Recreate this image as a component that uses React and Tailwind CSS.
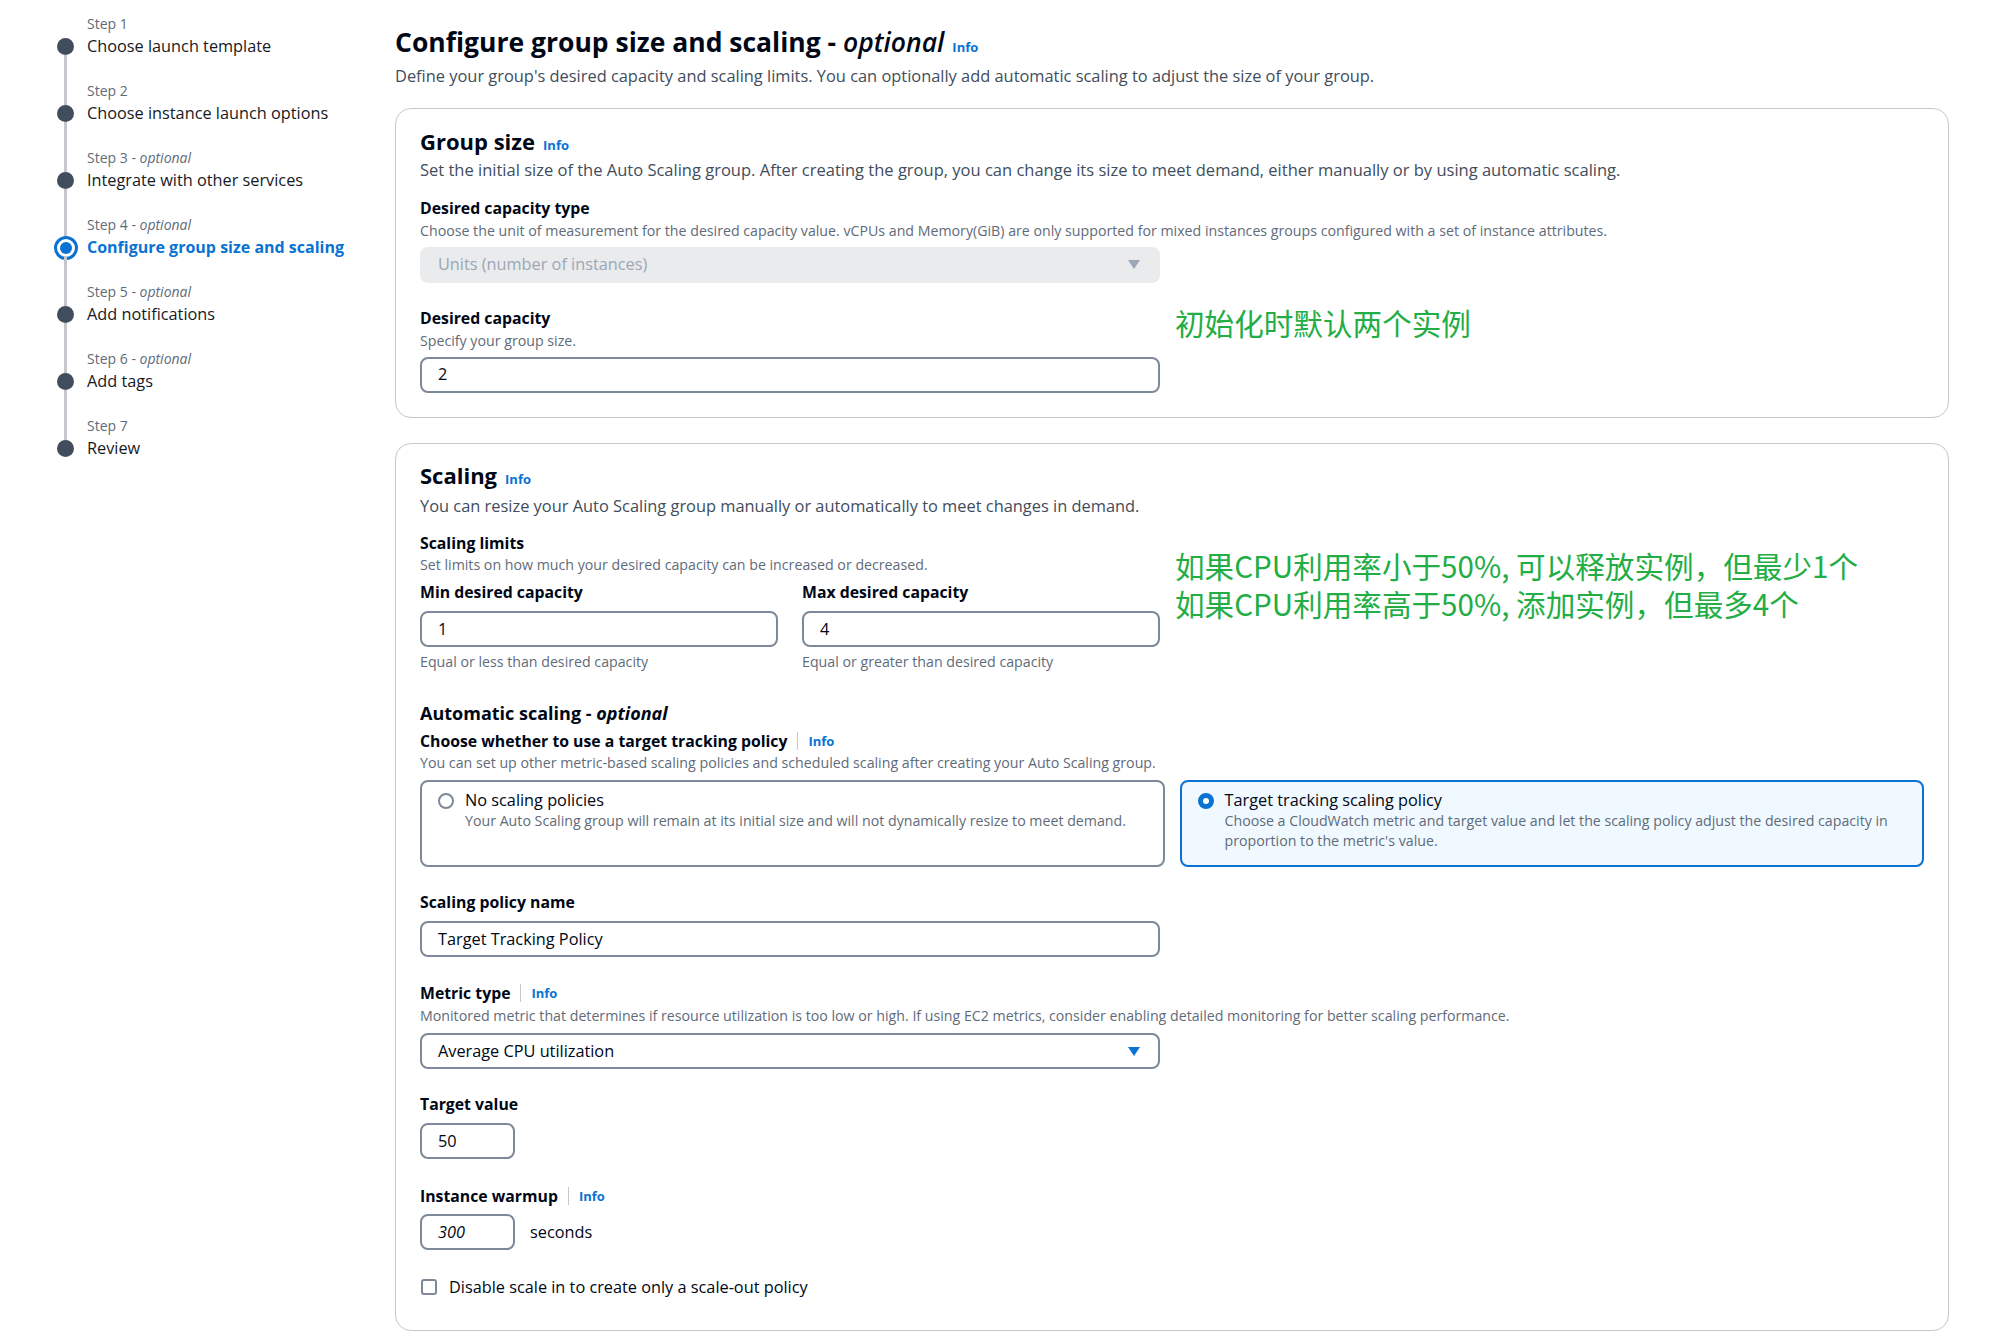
import React from "react";

const steps = [
  { n: 1, title: "Choose launch template" },
  { n: 2, title: "Choose instance launch options" },
  { n: 3, optional: true, title: "Integrate with other services" },
  { n: 4, optional: true, title: "Configure group size and scaling", active: true },
  { n: 5, optional: true, title: "Add notifications" },
  { n: 6, optional: true, title: "Add tags" },
  { n: 7, title: "Review" },
];

function Step({ s, first, last }) {
  return (
    <div className="flex">
      <div className="w-[17px] flex flex-col items-center shrink-0">
        <div className={"w-[3px] h-[25px] " + (first ? "" : "bg-[#c6c6cd]")} />
        <div className="h-[17px] w-[17px] flex items-center justify-center">
          {s.active ? (
            <div className="w-6 h-6 shrink-0 rounded-full border-[3px] border-[#0972d3] bg-white flex items-center justify-center">
              <div className="w-3 h-3 rounded-full bg-[#0972d3]" />
            </div>
          ) : (
            <div className="w-[17px] h-[17px] rounded-full bg-[#414d5c]" />
          )}
        </div>
        <div className={"w-[3px] h-[25px] " + (last ? "" : "bg-[#c6c6cd]")} />
      </div>
      <div className="ml-[13px]">
        <div className="text-[14px] leading-[21px] text-[#5f6b7a]">
          Step {s.n}
          {s.optional && (
            <>
              {" - "}
              <i>optional</i>
            </>
          )}
        </div>
        <div
          className={
            "leading-[24px] whitespace-nowrap " +
            (s.active ? "text-[16px] font-bold text-[#0972d3]" : "text-[16.3px] text-[#16191f]")
          }
        >
          {s.title}
        </div>
      </div>
    </div>
  );
}

function Info({ className = "" }) {
  return <span className={"text-[13px] font-bold text-[#0972d3] " + className}>Info</span>;
}

function Label({ children, className = "" }) {
  return (
    <div className={"text-[15.8px] leading-[22px] font-bold text-[#000716] " + className}>{children}</div>
  );
}

function Desc({ children, className = "" }) {
  return <div className={"text-[14.2px] leading-[18px] text-[#5f6b7a] " + className}>{children}</div>;
}

function Input({ children, className = "" }) {
  return (
    <div
      className={
        "h-9 border-2 border-[#7d8998] rounded-lg px-4 flex items-center text-[16.3px] text-[#000716] " + className
      }
    >
      {children}
    </div>
  );
}

function Arrow({ color }) {
  return (
    <svg width="12" height="9" viewBox="0 0 12 9">
      <path d="M0 0 L12 0 L6 9 Z" fill={color} />
    </svg>
  );
}

function Divider() {
  return <span className="inline-block w-px h-[18px] bg-[#c6c6cd] mx-[10px] align-middle" />;
}

const note2 = "如果CPU利用率小于50%, 可以释放实例，但最少1个\n如果CPU利用率高于50%, 添加实例，但最多4个";

export default function App() {
  return (
    <div className="min-h-screen w-full bg-white flex font-['Open_Sans',sans-serif] text-[#000716]">
      <aside className="w-[395px] shrink-0 pl-[57px] pt-[13px]">
        {steps.map((s, i) => (
          <Step key={s.n} s={s} first={i === 0} last={i === steps.length - 1} />
        ))}
      </aside>

      <main className="flex-1 pr-[55px] pt-[25px] pb-4">
        <h1 className="text-[26.5px] leading-[34px] font-bold text-[#000716] flex items-baseline">
          <span>
            Configure group size and scaling - <i className="font-semibold">optional</i>
          </span>
          <Info className="ml-2" />
        </h1>
        <p className="mt-[1px] text-[16.4px] leading-[22px] text-[#414d5c]">
          Define your group's desired capacity and scaling limits. You can optionally add automatic scaling to adjust
          the size of your group.
        </p>

        {/* Group size */}
        <section className="mt-[21px] border border-[#c6c6cd] rounded-2xl px-6 pt-[18px] pb-[24px]">
          <div className="flex items-baseline">
            <h2 className="text-[22px] leading-[28px] font-bold">Group size</h2>
            <Info className="ml-2" />
          </div>
          <p className="mt-[3px] text-[16.5px] leading-[22px] text-[#414d5c]">
            Set the initial size of the Auto Scaling group. After creating the group, you can change its size to meet
            demand, either manually or by using automatic scaling.
          </p>

          <Label className="mt-[16px]">Desired capacity type</Label>
          <Desc className="mt-[3px]">
            Choose the unit of measurement for the desired capacity value. vCPUs and Memory(GiB) are only supported for
            mixed instances groups configured with a set of instance attributes.
          </Desc>
          <div className="mt-[7px] w-[740px] h-9 rounded-lg bg-[#e9ebed] pl-[18px] pr-5 flex items-center justify-between text-[16.3px] text-[#9ba7b6]">
            <span>Units (number of instances)</span>
            <Arrow color="#9ba7b6" />
          </div>

          <div className="mt-[24px] flex items-start">
            <div className="w-[740px] shrink-0">
              <Label>Desired capacity</Label>
              <Desc className="mt-[3px]">Specify your group size.</Desc>
              <Input className="mt-[7px]">2</Input>
            </div>
            <div className="ml-[15px] text-[29.6px] leading-[32px] text-[#22ad45] font-['Noto_Sans_CJK_SC',sans-serif]">
              初始化时默认两个实例
            </div>
          </div>
        </section>

        {/* Scaling */}
        <section className="mt-[25px] border border-[#c6c6cd] rounded-2xl px-6 pt-[17px] pb-[32px]">
          <div className="flex items-baseline">
            <h2 className="text-[22px] leading-[28px] font-bold">Scaling</h2>
            <Info className="ml-2" />
          </div>
          <p className="mt-[6px] text-[16.4px] leading-[22px] text-[#414d5c]">
            You can resize your Auto Scaling group manually or automatically to meet changes in demand.
          </p>

          <div className="mt-[15px] flex items-start">
            <div className="w-[740px] shrink-0">
              <Label>Scaling limits</Label>
              <Desc className="mt-[2px]">Set limits on how much your desired capacity can be increased or decreased.</Desc>
              <div className="mt-[7px] grid grid-cols-2 gap-x-6">
                <div>
                  <Label>Min desired capacity</Label>
                  <Input className="mt-2">1</Input>
                  <Desc className="mt-[6px]">Equal or less than desired capacity</Desc>
                </div>
                <div>
                  <Label>Max desired capacity</Label>
                  <Input className="mt-2">4</Input>
                  <Desc className="mt-[6px]">Equal or greater than desired capacity</Desc>
                </div>
              </div>
            </div>
            <div className="ml-[15px] mt-[15px] text-[29.6px] leading-[38px] text-[#22ad45] font-['Noto_Sans_CJK_SC',sans-serif] whitespace-pre">
              {note2}
            </div>
          </div>

          <div className="mt-[30px] text-[18px] leading-[24px] font-bold">
            Automatic scaling - <i className="font-bold">optional</i>
          </div>
          <div className="mt-[5px] flex items-center text-[15.8px] leading-[22px] font-bold">
            <span>Choose whether to use a target tracking policy</span>
            <Divider />
            <Info />
          </div>
          <Desc className="mt-[2px]">
            You can set up other metric-based scaling policies and scheduled scaling after creating your Auto Scaling
            group.
          </Desc>

          <div className="mt-2 grid grid-cols-2 gap-x-[15px]">
            <div className="h-[87px] border-2 border-[#7d8998] rounded-lg pl-4 pr-4 pt-[7px] flex items-start">
              <div className="mt-[4px] w-4 h-4 shrink-0 rounded-full border-2 border-[#7d8998] bg-white" />
              <div className="ml-[11px]">
                <div className="text-[16.3px] leading-[22px]">No scaling policies</div>
                <div className="text-[14.2px] leading-[20px] text-[#5f6b7a]">
                  Your Auto Scaling group will remain at its initial size and will not dynamically resize to meet
                  demand.
                </div>
              </div>
            </div>
            <div className="h-[87px] border-2 border-[#0972d3] bg-[#f0f9ff] rounded-lg pl-4 pr-4 pt-[7px] flex items-start">
              <div className="mt-[4px] w-4 h-4 shrink-0 rounded-full border-[5px] border-[#0972d3] bg-white" />
              <div className="ml-[11px]">
                <div className="text-[16.3px] leading-[22px]">Target tracking scaling policy</div>
                <div className="text-[14.2px] leading-[20px] text-[#5f6b7a]">
                  Choose a CloudWatch metric and target value and let the scaling policy adjust the desired capacity in
                  proportion to the metric's value.
                </div>
              </div>
            </div>
          </div>

          <Label className="mt-6">Scaling policy name</Label>
          <Input className="mt-2 w-[740px]">Target Tracking Policy</Input>

          <div className="mt-[25px] flex items-center text-[15.8px] leading-[22px] font-bold">
            <span>Metric type</span>
            <Divider />
            <Info />
          </div>
          <Desc className="mt-[3px]">
            Monitored metric that determines if resource utilization is too low or high. If using EC2 metrics, consider
            enabling detailed monitoring for better scaling performance.
          </Desc>
          <div className="mt-2 w-[740px] h-9 border-2 border-[#7d8998] rounded-lg pl-4 pr-[18px] flex items-center justify-between text-[16.3px]">
            <span>Average CPU utilization</span>
            <Arrow color="#0972d3" />
          </div>

          <Label className="mt-6">Target value</Label>
          <Input className="mt-2 w-[95px]">50</Input>

          <div className="mt-[26px] flex items-center text-[15.8px] leading-[22px] font-bold">
            <span>Instance warmup</span>
            <Divider />
            <Info />
          </div>
          <div className="mt-[7px] flex items-center">
            <Input className="w-[95px] italic text-[#8d99a8]">300</Input>
            <span className="ml-[15px] text-[16.3px]">seconds</span>
          </div>

          <div className="mt-[26px] flex items-center text-[16.3px] leading-[22px]">
            <div className="w-4 h-4 ml-px border-2 border-[#7d8998] rounded-[3px]" />
            <span className="ml-3">Disable scale in to create only a scale-out policy</span>
          </div>
        </section>
      </main>
    </div>
  );
}
